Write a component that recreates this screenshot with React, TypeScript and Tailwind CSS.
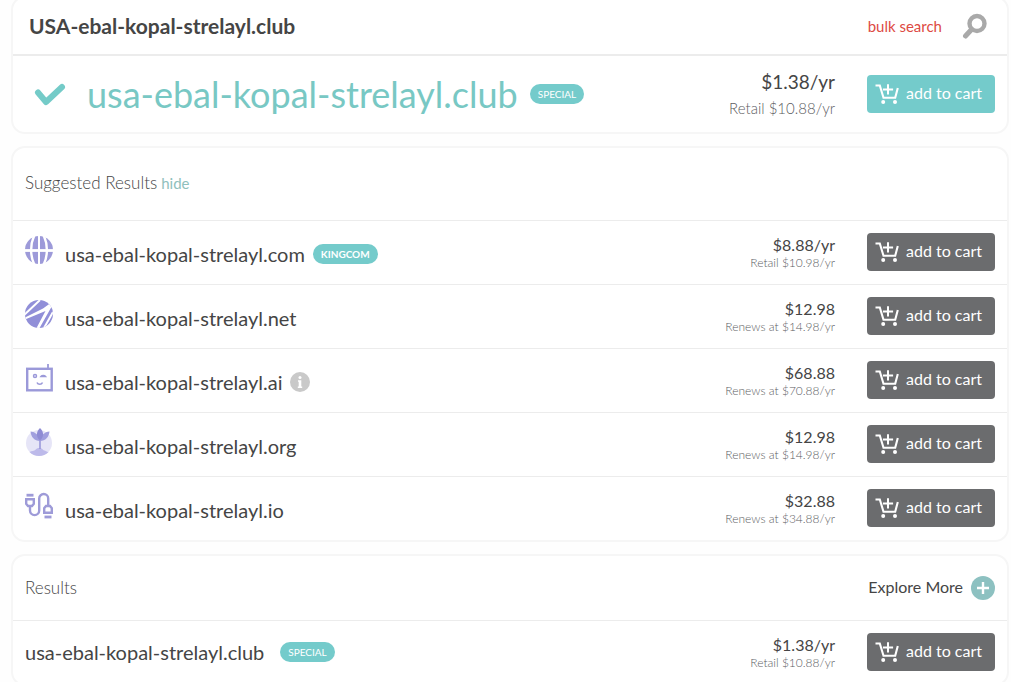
import React from 'react';
import { clsx } from 'clsx';

interface Domain {
  name: string;
  price: string;
  note: string;
  icon?: React.ReactNode;
  badge?: string;
  info?: boolean;
}

const CartIcon = () => (
  <svg width="24" height="24" viewBox="0 0 24 24" fill="none" stroke="currentColor" strokeWidth="2" aria-hidden="true">
    <path d="M0.5 4.5h4.3L8.5 16.7h11.7L22.8 7" strokeWidth="2.1" />
    <path d="M13 3.2v10.4M7.9 8.4h10.2" />
    <circle cx="8.2" cy="21" r="2" fill="currentColor" stroke="none" />
    <circle cx="20" cy="21" r="2" fill="currentColor" stroke="none" />
  </svg>
);

const GlobeIcon = () => (
  <svg width="28" height="28" viewBox="0 0 28 28" aria-hidden="true">
    <circle cx="14" cy="14" r="14" fill="#9d9ad9" />
    <g stroke="#fff" fill="none" strokeWidth="2">
      <path d="M14 0v28" />
      <path d="M0 14.5h28" strokeWidth="2.8" />
      <path d="M9.5 -1C5 8 5 20 9.5 29M18.5 -1c4.5 9 4.5 21 0 30" strokeWidth="2.4" />
    </g>
  </svg>
);

const NetIcon = () => (
  <svg width="28" height="28" viewBox="0 0 28 28" aria-hidden="true">
    <clipPath id="net-disc">
      <circle cx="14" cy="14" r="14" />
    </clipPath>
    <g clipPath="url(#net-disc)">
      <rect width="28" height="28" fill="#918fd8" />
      <path d="M-1 18L18 8.5 27 2v4L14 29h-3L20.500 11 -1 20z" fill="#fff" />
      <path d="M-1 15L15 0M28 12L19 28" fill="none" stroke="#fff" strokeWidth="2" />
    </g>
  </svg>
);

const RobotIcon = () => (
  <svg width="28" height="28" viewBox="0 0 28 28" fill="none" stroke="#9b99d9" aria-hidden="true">
    <rect x="2.2" y="4.8" width="24.5" height="21.5" strokeWidth="2.4" />
    <path d="M23 4V0" strokeWidth="1.8" />
    <circle cx="10" cy="12" r="1.5" strokeWidth="1.5" />
    <path d="M16 12.5c1-1.400 3.500-1.400 4.500 0z" strokeWidth="1.6" />
    <path d="M12 18.5c1 2.400 4.500 2.400 5.500 0" strokeWidth="1.6" />
  </svg>
);

const PlantIcon = () => (
  <svg width="28" height="28" viewBox="0 0 28 28" aria-hidden="true">
    <circle cx="14" cy="15" r="13" fill="#e6e5f7" />
    <path d="M4.500 24c2-1.500 5-.8 6-2.300 1.500-2.200 6-2.200 7.500 0 .8 1.200 2 .6 3 1.500.9.600 1.500.6 2.500.8C18.500 29.300 9.500 29.300 4.500 24z" fill="#bdbaea" />
    <path d="M15 21V11" stroke="#9a98da" strokeWidth="1.6" />
    <path d="M15 13C9.500 13 6 9 5.500 3.500 10.500 4 14 7 15 13zM15 13c5.500 0 9-4 9.500-9.500C19.500 4 16 7 15 13z" fill="#a09ede" />
    <path d="M15 12.500c-4.300-4-4-8.500 0-12.500 4 4 4.300 8.500 0 12.500z" fill="#8e8bd4" />
  </svg>
);

const CableIcon = () => (
  <svg width="28" height="28" viewBox="0 0 28 28" fill="none" stroke="#9e9bd8" strokeWidth="2.4" aria-hidden="true">
    <path d="M1.500 3.200h7" strokeWidth="2.8" />
    <path d="M1.200 7.200h7.600v4.600L7 14H3l-1.800-2.200z" />
    <path d="M5 14v4.500a4.600 4.600 0 0 0 9.200 0V6.500a4.500 4.500 0 0 1 9 0V14" />
    <path d="M19.200 20.800h7.600v-4.600L25 14h-4l-1.800 2.200z" />
    <path d="M19.500 25h7" strokeWidth="2.8" />
  </svg>
);

const suggested: Domain[] = [
  { name: 'usa-ebal-kopal-strelayl.com', price: '$8.88/yr', note: 'Retail $10.98/yr', icon: <GlobeIcon />, badge: 'KINGCOM' },
  { name: 'usa-ebal-kopal-strelayl.net', price: '$12.98', note: 'Renews at $14.98/yr', icon: <NetIcon /> },
  { name: 'usa-ebal-kopal-strelayl.ai', price: '$68.88', note: 'Renews at $70.88/yr', icon: <RobotIcon />, info: true },
  { name: 'usa-ebal-kopal-strelayl.org', price: '$12.98', note: 'Renews at $14.98/yr', icon: <PlantIcon /> },
  { name: 'usa-ebal-kopal-strelayl.io', price: '$32.88', note: 'Renews at $34.88/yr', icon: <CableIcon /> },
];

const results: Domain[] = [
  { name: 'usa-ebal-kopal-strelayl.club', price: '$1.38/yr', note: 'Retail $10.88/yr', badge: 'SPECIAL' },
];

const AddToCart = ({ primary }: { primary?: boolean }) => (
  <button
    className={clsx(
      'flex h-[38px] w-32 shrink-0 items-center gap-[7px] rounded pb-0.5 pl-2 text-base text-white',
      primary ? 'bg-[#74cbcb]' : 'bg-[#6b6c6e]'
    )}
  >
    <CartIcon />
    add to cart
  </button>
);

const Badge = ({ children, bold }: { children: React.ReactNode; bold?: boolean }) => (
  <span
    className={clsx(
      'flex h-5 items-center rounded-full bg-[#74cbcb] px-2 text-[10px] text-white',
      bold && 'font-bold'
    )}
  >
    {children}
  </span>
);

const Card = ({ children }: { children: React.ReactNode }) => (
  <section className="rounded-[14px] border-2 border-[#f6f6f6] bg-white">{children}</section>
);

const DomainRow = ({ domain }: { domain: Domain }) => (
  <li className="flex h-16 items-center border-t border-[#ececec] px-3 pb-px">
    {domain.icon && <span className="mr-3 pb-1">{domain.icon}</span>}
    <div className={clsx('flex flex-1 items-center', domain.icon && 'pt-1')}>
      <span className="text-xl leading-6">{domain.name}</span>
      {domain.badge && (
        <span className={domain.icon ? 'ml-2' : 'ml-4'}>
          <Badge bold={!!domain.icon}>{domain.badge}</Badge>
        </span>
      )}
      {domain.info && (
        <button
          aria-label="More information"
          className="ml-2 flex size-5 items-center justify-center rounded-full bg-[#c9c9c9] text-white"
        >
          <svg width="6" height="12" viewBox="0 0 6 12" fill="currentColor" aria-hidden="true">
            <circle cx="3" cy="1.500" r="1.500" />
            <path d="M1 4.200h3.300v6.200H5.200V12H0.800v-1.600h0.900V5.800H1z" />
          </svg>
        </button>
      )}
    </div>
    <div className="mr-8 pt-0.5 text-right">
      <div className="text-base leading-5">{domain.price}</div>
      <div className="text-xs font-light text-[#5c5d5f]">{domain.note}</div>
    </div>
    <AddToCart />
  </li>
);

export default function App() {
  return (
    <main className="h-screen overflow-hidden bg-[#fefefe] pr-0.5 pl-[11px] font-['Lato',sans-serif] text-[#454545]">
      <div className="-mt-1 flex flex-col gap-3">
        <Card>
          <header className="flex h-[58px] items-center border-b-2 border-[#ececec] pr-5 pl-4">
            <h1 className="flex-1 text-[21px] font-bold">USA-ebal-kopal-strelayl.club</h1>
            <a href="#bulk" className="mr-5 text-[15px] text-[#dd4a43]">
              bulk search
            </a>
            <button aria-label="Search">
              <svg width="25" height="26" viewBox="0 0 25 26" fill="none" stroke="#a9a9a9" aria-hidden="true">
                <circle cx="15" cy="10.500" r="7.500" strokeWidth="4.400" />
                <path d="M9.500 16.500L3.500 23" strokeWidth="5" strokeLinecap="round" />
              </svg>
            </button>
          </header>
          <div className="flex h-[76px] items-center pr-3 pl-5">
            <svg width="34" height="26" viewBox="0 0 34 26" fill="none" aria-hidden="true">
              <path d="M5 11.500l8 9.500L29 6" stroke="#74cbc8" strokeWidth="6" strokeLinecap="round" strokeLinejoin="round" />
            </svg>
            <h2 className="mr-3 ml-5 text-4xl text-[#78c8c4]">usa-ebal-kopal-strelayl.club</h2>
            <Badge>SPECIAL</Badge>
            <div className="mr-8 ml-auto text-right">
              <div className="text-[19px] leading-7">$1.38/yr</div>
              <div className="text-[15px] leading-6 font-light text-[#5c5d5f]">Retail $10.88/yr</div>
            </div>
            <AddToCart primary />
          </div>
        </Card>

        <Card>
          <div className="flex h-[72px] items-center gap-1 px-3 pb-0.5">
            <h3 className="text-[17px] font-light">Suggested Results</h3>
            <button className="text-[15px] text-[#8fc0bc]">hide</button>
          </div>
          <ul>
            {suggested.map((d) => (
              <DomainRow key={d.name} domain={d} />
            ))}
          </ul>
        </Card>

        <Card>
          <div className="flex h-16 items-center justify-between px-3">
            <h3 className="text-[17px] font-light">Results</h3>
            <button className="flex items-center gap-2 text-base">
              <span className="pb-0.5">Explore More</span>
              <span className="flex size-6 items-center justify-center rounded-full bg-[#8dc1c1]">
                <svg width="12" height="12" viewBox="0 0 12 12" stroke="#fff" strokeWidth="2.4" aria-hidden="true">
                  <path d="M6 0v12M0 6h12" />
                </svg>
              </span>
            </button>
          </div>
          <ul>
            {results.map((d) => (
              <DomainRow key={d.name} domain={d} />
            ))}
          </ul>
        </Card>
      </div>
    </main>
  );
}
